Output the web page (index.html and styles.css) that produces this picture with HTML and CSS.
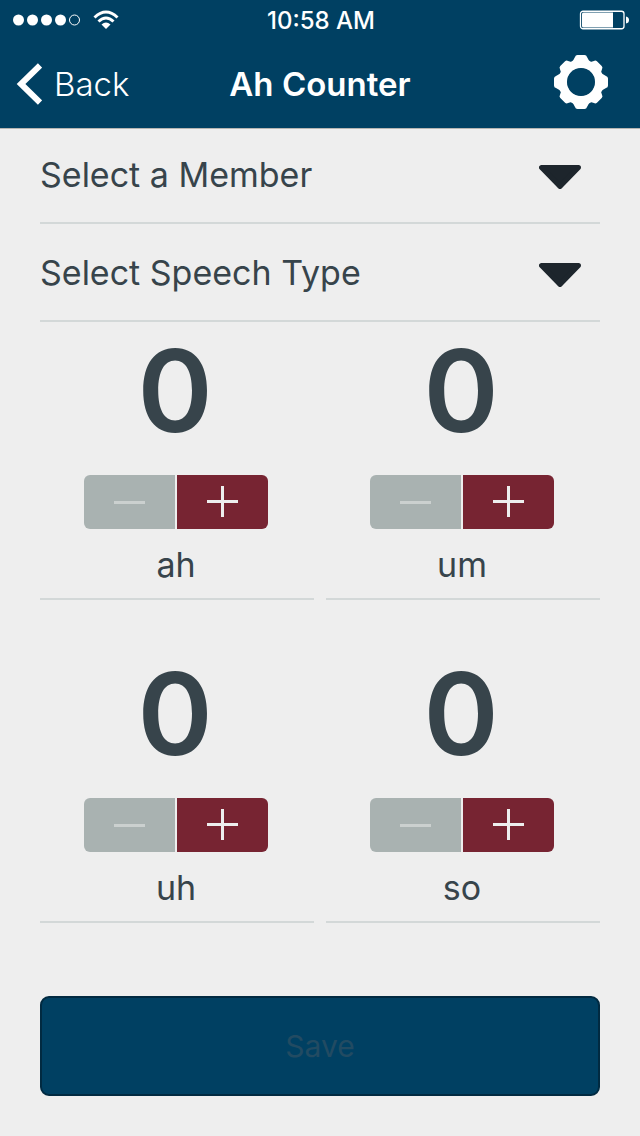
FILE: index.html
```html
<!DOCTYPE html>
<html lang="en">
<head>
<meta charset="utf-8">
<meta name="viewport" content="width=device-width, initial-scale=1">
<title>Ah Counter</title>
<link rel="stylesheet" href="styles.css">
</head>
<body>
<header class="header">
  <div class="status">
    <div class="signal">
      <svg width="68" height="12" viewBox="0 0 68 12" fill="#fff" aria-hidden="true"><circle cx="5.5" cy="6" r="5.5"/><circle cx="19.5" cy="6" r="5.5"/><circle cx="33.5" cy="6" r="5.5"/><circle cx="47.5" cy="6" r="5.5"/><circle cx="61.5" cy="6" r="5" fill="none" stroke="#fff"/></svg>
      <svg width="26" height="20" viewBox="0 0 26 20" fill="none" stroke="#fff" stroke-width="3" aria-hidden="true"><path d="M1.5 7.5Q13-3.5 24.5 7.5M5.5 11.5Q13 4.5 20.5 11.5"/><path d="M8.5 14.5Q13 10.5 17.5 14.5L13 19z" fill="#fff" stroke="none"/></svg>
    </div>
    <span class="time">10:58 AM</span>
    <svg class="battery" width="50" height="20" viewBox="0 0 50 20" aria-hidden="true"><rect x="1.5" y="1.25" width="43.5" height="17.5" rx="2.5" fill="none" stroke="#fff" stroke-width="1.3"/><path d="M3 4Q3 2.5 4.500 2.5H34V17.5H4.500Q3 17.5 3 16z" fill="#fff"/><path d="M47 6.5Q50 7 50 10T47 13.5z" fill="#fff"/></svg>
  </div>
  <nav class="nav">
    <a class="back" href="#"><svg width="26" height="42" viewBox="0 0 26 42" aria-hidden="true"><path d="M24 2.500L5 21 24 39.500" fill="none" stroke="#fff" stroke-width="6"/></svg>Back</a>
    <h1 class="title">Ah Counter</h1>
    <button class="settings" type="button" aria-label="Settings"><svg width="54" height="54" viewBox="-27 -27 54 54" aria-hidden="true"><g fill="#fff"><path id="tooth" d="M-10.500-19Q-7-22-6-25Q-5.500-27-3.500-27H3.500Q5.500-27 6-25Q7-22 10.500-19z"/><use href="#tooth" transform="rotate(45) scale(.96)"/><use href="#tooth" transform="rotate(90)"/><use href="#tooth" transform="rotate(135) scale(.96)"/><use href="#tooth" transform="rotate(180)"/><use href="#tooth" transform="rotate(225) scale(.96)"/><use href="#tooth" transform="rotate(270)"/><use href="#tooth" transform="rotate(315) scale(.96)"/></g><circle r="18" fill="none" stroke="#fff" stroke-width="9"/><circle r="14" fill="#004062"/></svg></button>
  </nav>
</header>
<main class="main">
  <div class="picker">
    <select class="select" aria-label="Member"><option>Select a Member</option></select>
    <svg class="arrow" width="42" height="24" viewBox="0 0 42 24" aria-hidden="true"><path d="M2.500 2.500H39.500L21 21.500z" fill="#1d252c" stroke="#1d252c" stroke-width="5" stroke-linejoin="round"/></svg>
  </div>
  <div class="picker">
    <select class="select" aria-label="Speech type"><option>Select Speech Type</option></select>
    <svg class="arrow" width="42" height="24" viewBox="0 0 42 24" aria-hidden="true"><path d="M2.500 2.500H39.500L21 21.500z" fill="#1d252c" stroke="#1d252c" stroke-width="5" stroke-linejoin="round"/></svg>
  </div>
  <div class="counters">
    <section class="counter">
      <output class="count">0</output>
      <div class="stepper">
        <button class="step minus" type="button" aria-label="Decrease ah" disabled><svg width="31" height="32" viewBox="0 0 31 32"><path d="M0 15h31v3H0z"/></svg></button>
        <button class="step plus" type="button" aria-label="Increase ah"><svg width="31" height="32" viewBox="0 0 31 32"><path d="M0 14h14V0h3v14h14v3H17v14h-3V17H0z"/></svg></button>
      </div>
      <div class="word">ah</div>
    </section>
    <section class="counter">
      <output class="count">0</output>
      <div class="stepper">
        <button class="step minus" type="button" aria-label="Decrease um" disabled><svg width="31" height="32" viewBox="0 0 31 32"><path d="M0 15h31v3H0z"/></svg></button>
        <button class="step plus" type="button" aria-label="Increase um"><svg width="31" height="32" viewBox="0 0 31 32"><path d="M0 14h14V0h3v14h14v3H17v14h-3V17H0z"/></svg></button>
      </div>
      <div class="word">um</div>
    </section>
    <section class="counter">
      <output class="count">0</output>
      <div class="stepper">
        <button class="step minus" type="button" aria-label="Decrease uh" disabled><svg width="31" height="32" viewBox="0 0 31 32"><path d="M0 15h31v3H0z"/></svg></button>
        <button class="step plus" type="button" aria-label="Increase uh"><svg width="31" height="32" viewBox="0 0 31 32"><path d="M0 14h14V0h3v14h14v3H17v14h-3V17H0z"/></svg></button>
      </div>
      <div class="word">uh</div>
    </section>
    <section class="counter">
      <output class="count">0</output>
      <div class="stepper">
        <button class="step minus" type="button" aria-label="Decrease so" disabled><svg width="31" height="32" viewBox="0 0 31 32"><path d="M0 15h31v3H0z"/></svg></button>
        <button class="step plus" type="button" aria-label="Increase so"><svg width="31" height="32" viewBox="0 0 31 32"><path d="M0 14h14V0h3v14h14v3H17v14h-3V17H0z"/></svg></button>
      </div>
      <div class="word">so</div>
    </section>
  </div>
  <button class="save" type="button" disabled>Save</button>
</main>
</body>
</html>
```
FILE: styles.css
```css
* {
  box-sizing: border-box;
}

body {
  margin: 0;
  background: #eee;
  color: #37444b;
  font-family: Inter, "Liberation Sans", sans-serif;
  font-size: 34px;
}

button,
select {
  margin: 0;
  padding: 0;
  border: 0;
  background: none;
  color: inherit;
  font: inherit;
}

svg {
  display: block;
}

.header {
  background: #004062;
  color: #fff;
  box-shadow: 0 1px 0 #b5b5b2;
}

.status,
.nav {
  display: grid;
  grid-template-columns: 1fr auto 1fr;
  align-items: center;
}

.status {
  height: 40px;
  padding: 0 11px 0 13px;
}

.signal {
  display: flex;
  align-items: center;
  gap: 12px;
}

.time {
  font-size: 24px;
  font-weight: 500;
}

.battery {
  justify-self: end;
}

.nav {
  height: 88px;
  padding: 0 16px;
  font-size: 33px;
}

.back {
  display: flex;
  align-items: center;
  gap: 12px;
  color: inherit;
  font-weight: 300;
  text-decoration: none;
}

.title {
  margin: 0;
  font-size: 33px;
  font-weight: 600;
}

.settings {
  justify-self: end;
  padding: 0 16px 4px 0;
}

.main {
  margin-top: -2px;
  padding: 0 40px 40px;
}

.picker {
  display: grid;
  align-items: center;
  border-bottom: 2px solid #d3d8d8;
}

.select,
.arrow {
  grid-area: 1 / 1;
}

.select {
  width: 100%;
  height: 96px;
  appearance: none;
}

.arrow {
  justify-self: end;
  margin: 6px 19px 0 0;
  pointer-events: none;
}

.counters {
  display: grid;
  grid-template-columns: 1fr 1fr;
  gap: 45px 12px;
}

.counter {
  display: flex;
  flex-direction: column;
  align-items: center;
  padding-right: 2px;
  border-bottom: 2px solid #d3d8d8;
}

.count {
  padding-right: 2px;
  font-size: 114px;
  font-weight: 600;
  line-height: 138px;
}

.stepper {
  display: flex;
  gap: 2px;
  margin-top: 15px;
}

.step {
  display: grid;
  place-items: center;
  width: 91px;
  height: 54px;
}

.minus {
  border-radius: 6px 0 0 6px;
  background: #a9b2b1;
  fill: #cbd0cf;
}

.plus {
  border-radius: 0 6px 6px 0;
  background: #772432;
  fill: #eee;
}

.word {
  padding-top: 2px;
  line-height: 67px;
}

.save {
  width: 100%;
  height: 100px;
  margin-top: 73px;
  border: 2px solid #012a41;
  border-radius: 9px;
  background: #004062;
  color: #224b62;
  font-size: 30px;
}
```
